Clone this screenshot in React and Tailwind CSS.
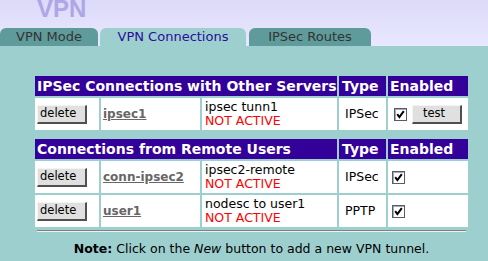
import React from "react";

function Btn({ children, pad }) {
  return (
    <span
      className={`flex items-center w-[50px] h-[19px] bg-[#e0e0e0] border-t border-l border-t-[#f4f4f4] border-l-[#f4f4f4] border-r-2 border-b-2 border-r-[#505050] border-b-[#505050] text-[11.5px] leading-none text-black ${pad}`}
    >
      {children}
    </span>
  );
}

function Check() {
  return (
    <span className="flex items-center justify-center w-[13px] h-[13px] border border-[#5a5a6e] bg-white shadow-[inset_1px_1px_0_#a8a8b8]">
      <svg width="9" height="9" viewBox="0 0 9 9">
        <path d="M1.2 4.2 L3.4 7 L7.8 1.2" stroke="#000" strokeWidth="2" fill="none" />
      </svg>
    </span>
  );
}

function Head({ title }) {
  return (
    <>
      <div className="col-span-3 h-[20px] bg-[#330099] text-white font-bold text-[14px] flex items-center pl-[2px] whitespace-nowrap">
        {title}
      </div>
      <div className="h-[20px] bg-[#330099] text-white font-bold text-[14px] flex items-center pl-[3px]">
        Type
      </div>
      <div className="h-[20px] bg-[#330099] text-white font-bold text-[14px] flex items-center pl-[2px]">
        Enabled
      </div>
    </>
  );
}

function Row({ name, desc, type, test }) {
  return (
    <>
      <div className="h-[32px] bg-white flex items-center pl-[2px]">
        <Btn pad="pl-[2px]">delete</Btn>
      </div>
      <div className="h-[32px] bg-white flex items-center pl-[2px]">
        <span className="font-bold text-[12px] text-[#666666] underline">{name}</span>
      </div>
      <div className="h-[32px] bg-white flex flex-col justify-center pl-[3px] text-[12.5px] leading-[14px] whitespace-nowrap">
        <span className="text-black">{desc}</span>
        <span className="text-[#ff0000]">NOT ACTIVE</span>
      </div>
      <div className="h-[32px] bg-white flex items-center pl-[6px] text-[12.5px] text-black">
        {type}
      </div>
      {test ? (
        <div className="h-[32px] bg-white flex items-center justify-center gap-[5px]">
          <Check />
          <Btn pad="pl-[10px]">test</Btn>
        </div>
      ) : (
        <div className="h-[32px] bg-white flex items-center pl-[4px]">
          <Check />
        </div>
      )}
    </>
  );
}

export default function App() {
  return (
    <div className="w-[488px] h-[261px] overflow-hidden bg-[#9ecfcf] font-['DejaVu_Sans',sans-serif]">
      <div className="h-[46px] bg-linear-to-b from-[#dcdaf8] to-[#e9e8ff] flex flex-col">
        <div className="h-[28px] pl-[37px] overflow-hidden">
          <span className="block -mt-[3px] font-['Liberation_Sans',sans-serif] font-bold text-[24px] leading-[24px] text-[#aea6e6]">
            VPN
          </span>
        </div>
        <div className="h-[18px] flex items-stretch text-[13px]">
          <div className="w-[98px] rounded-t-[6px] bg-[#5f9b9b] text-[#333333] flex items-center justify-center">
            VPN Mode
          </div>
          <div className="ml-[2px] w-[146px] rounded-t-[6px] bg-[#9ecfcf] text-[#2b0d9a] flex items-center justify-center">
            VPN Connections
          </div>
          <div className="ml-[3px] w-[122px] rounded-t-[6px] bg-[#5f9b9b] text-[#333333] flex items-center justify-center">
            IPSec Routes
          </div>
        </div>
      </div>
      <div className="pt-[30px] pl-[35px]">
        <div className="grid grid-cols-[64px_99px_135px_47px_80px] gap-[2px] w-[433px]">
          <Head title="IPSec Connections with Other Servers" />
          <Row name="ipsec1" desc="ipsec tunn1" type="IPSec" test />
        </div>
        <div className="mt-[9px] grid grid-cols-[64px_99px_135px_47px_80px] gap-[2px] w-[433px]">
          <Head title="Connections from Remote Users" />
          <Row name="conn-ipsec2" desc="ipsec2-remote" type="IPSec" />
          <Row name="user1" desc="nodesc to user1" type="PPTP" />
        </div>
        <div className="mt-[3px] ml-[2px] w-[429px] h-[2px] border-t border-t-[#808080] border-b border-b-[#e8f4f4]" />
        <div className="mt-[10px] w-[433px] text-center text-[12.5px] text-black leading-[14px]">
          <span className="font-bold">Note:</span> Click on the <i>New</i> button to add a new VPN tunnel.
        </div>
      </div>
    </div>
  );
}
